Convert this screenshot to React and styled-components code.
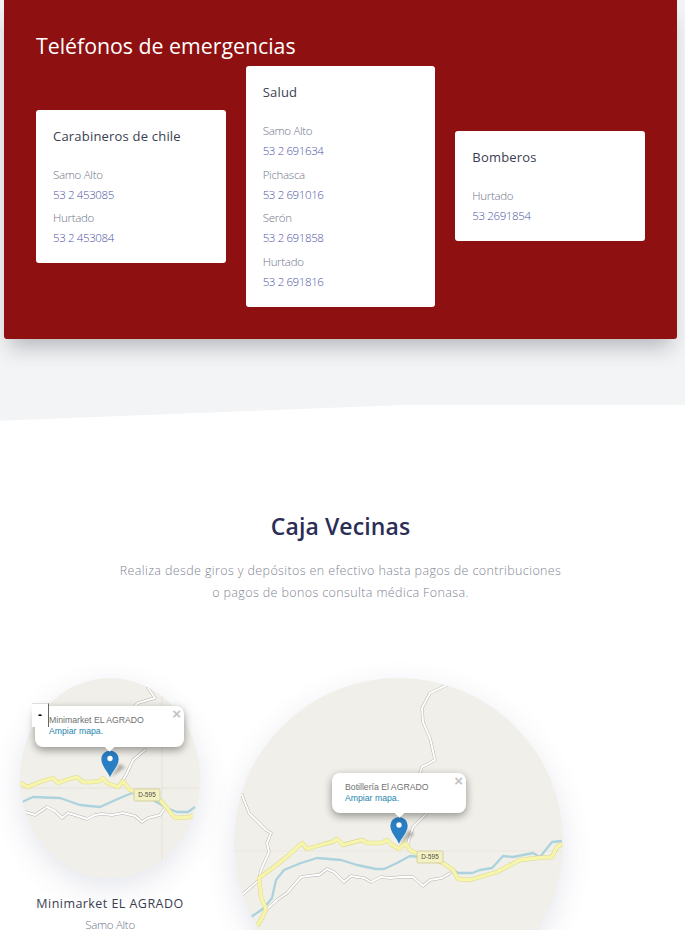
import React from "react";
import styled, { createGlobalStyle } from "styled-components";

const Global = createGlobalStyle`
  html, body { margin: 0; padding: 0; background: #fff; overflow: hidden; height: 930px; }
  #root { height: 930px; overflow: hidden; }
  * { box-sizing: border-box; }
  body { font-family: "Open Sans", "Liberation Sans", sans-serif; }
`;

const TopBand = styled.section`
  background: #f3f4f6;
  padding: 0 8px 66px 4px;
`;
const Panel = styled.div`
  background: #8f1010;
  border-radius: 0 0 3px 3px;
  padding: 31px 32px 32px;
  box-shadow: 0 14px 20px -6px rgba(50, 60, 65, 0.32);
`;
const PanelTitle = styled.h2`
  margin: 0 0 5px;
  color: #fff;
  font-size: 21.3px;
  font-weight: 400;
  line-height: 30px;
`;
const CardRow = styled.div`
  display: grid;
  grid-template-columns: repeat(3, 1fr);
  gap: 20px;
  align-items: center;
`;
const Card = styled.div`
  background: #fff;
  border-radius: 3px;
  padding: 16px 17px 14.7px;
`;
const CardTitle = styled.h3`
  margin: 0 0 19px;
  color: #3b3e50;
  font-size: 13px;
  font-weight: 400;
  line-height: 20px;
  letter-spacing: 0.2px;
`;
const Contact = styled.div`
  & + & { margin-top: 3.67px; }
`;
const Place = styled.div`
  color: #70768a;
  font-size: 11.5px;
  font-weight: 300;
  line-height: 20px;
  letter-spacing: -0.3px;
`;
const Phone = styled.a`
  display: block;
  color: #4d55a6;
  font-size: 11.5px;
  font-weight: 300;
  line-height: 20px;
  letter-spacing: -0.38px;
`;
const Wedge = styled.div`
  height: 16px;
  background: #f3f4f6;
  clip-path: polygon(0 0, 100% 0, 60% 0, 0 100%);
`;
const Intro = styled.section`
  padding-top: 88px;
  text-align: center;
`;
const Heading = styled.h2`
  margin: 0 0 17px;
  color: #2c2e56;
  font-size: 23px;
  font-weight: 600;
  line-height: 34px;
  letter-spacing: 0.1px;
  transform: translateX(-2px);
`;
const Lead = styled.p`
  margin: 0;
  color: #7f8694;
  font-size: 12.5px;
  font-weight: 300;
  line-height: 22px;
  letter-spacing: 0.38px;
  transform: translateX(-2px);
`;
const MapGrid = styled.div`
  display: grid;
  grid-template-columns: 180px 329px;
  column-gap: 34px;
  align-items: start;
  padding: 74px 0 0 20px;
`;
const Store = styled.div`
  text-align: center;
`;
const MapFrame = styled.div`
  position: relative;
  width: ${(p) => p.$w}px;
  height: ${(p) => p.$h}px;
`;
const MapSurface = styled.svg`
  display: block;
  width: 100%;
  height: 100%;
  border-radius: 50%;
  background: #f1efe9;
  box-shadow: 0 10px 30px rgba(70, 80, 120, 0.14);
`;
const Popup = styled.div`
  position: absolute;
  left: ${(p) => p.$x}px;
  top: ${(p) => p.$y}px;
  width: ${(p) => p.$w}px;
  height: ${(p) => p.$h}px;
  padding: 9px 0 0 ${(p) => p.$pad}px;
  background: #fff;
  border-radius: 8px;
  box-shadow: 0 3px 9px rgba(0, 0, 0, 0.4);
  font-family: "Liberation Sans", Arial, sans-serif;
  font-size: 8.7px;
  line-height: 11px;
  text-align: left;
  color: #6f6f6f;
  &::after {
    content: "";
    position: absolute;
    left: 50%;
    bottom: -3.5px;
    width: 9px;
    height: 9px;
    margin-left: -4.5px;
    background: #fff;
    transform: rotate(45deg);
  }
`;
const PopupLink = styled.a`
  display: block;
  color: #1f86ad;
`;
const Close = styled.span`
  position: absolute;
  top: 2px;
  right: 3px;
  color: #c3c3c3;
  font-size: 15px;
  font-weight: 700;
  line-height: 12px;
`;
const Zoom = styled.div`
  position: absolute;
  z-index: 1;
  left: 12px;
  top: 25px;
  width: 17px;
  height: 24px;
  background: #fff;
  border-top: 1px solid #dcdcdc;
  border-right: 1px solid #666;
  color: #000;
  font: 700 12px/22px "Liberation Sans", Arial, sans-serif;
  text-align: center;
`;
const StoreName = styled.div`
  margin-top: 15px;
  color: #3b3e50;
  font-size: 12.5px;
  line-height: 22px;
  letter-spacing: 0.45px;
  white-space: nowrap;
`;
const StoreTown = styled.div`
  color: #70768a;
  font-size: 11.5px;
  font-weight: 300;
  line-height: 20px;
  letter-spacing: -0.3px;
`;

const Road = ({ d }) => (
  <>
    <path d={d} fill="none" stroke="#b4b3ad" strokeWidth="3" strokeLinejoin="round" strokeLinecap="round" />
    <path d={d} fill="none" stroke="#fff" strokeWidth="2" strokeLinejoin="round" strokeLinecap="round" />
  </>
);
const Highway = ({ d }) => (
  <>
    <path d={d} fill="none" stroke="#dcd994" strokeWidth="4.4" strokeLinejoin="round" />
    <path d={d} fill="none" stroke="#f7f5ac" strokeWidth="3.3" strokeLinejoin="round" />
  </>
);
const River = ({ d }) => <path d={d} fill="none" stroke="#acd3dd" strokeWidth="2.3" strokeLinejoin="round" />;
const Pin = ({ x, y }) => (
  <g transform={`translate(${x} ${y}) scale(0.333)`}>
    <path d="M4 80 L28 40 L46 50 Z" fill="#77776f" opacity="0.55" filter="url(#soft)" />
    <path d="M0 80 C-6 64 -26 46 -26 26 A26 26 0 0 1 26 26 C26 46 6 64 0 80 Z" fill="#2a7fc4" />
    <circle cx="0" cy="24" r="8" fill="#fff" />
  </g>
);
const Shield = ({ x, y }) => (
  <g>
    <rect x={x} y={y} width="26" height="12" rx="1.5" fill="#f3f0c4" stroke="#cdca96" strokeWidth="0.8" />
    <text x={x + 13} y={y + 8.4} textAnchor="middle" fontFamily="Liberation Sans, Arial, sans-serif" fontSize="6.4" fill="#4a4a40">D-595</text>
  </g>
);

const SmallMap = () => (
  <MapSurface viewBox="20 678 180 200" aria-hidden="true">
    <defs>
      <filter id="soft"><feGaussianBlur stdDeviation="4" /></filter>
      <filter id="fine"><feGaussianBlur stdDeviation="0.25" /></filter>
    </defs>
    <g filter="url(#fine)">
      <path d="M20 788H200M162 678V878" stroke="#e2dfd8" strokeWidth="0.8" fill="none" />
      <River d="M22 802L33 797L60 798L80 805L100 807L120 798L132 793L153 800L167 808L177 812L188 812L195 807" />
      <Road d="M25 812L35 815L47 807L55 811L62 818L68 813L78 816L87 819L95 815L102 814L112 815L123 813L135 816L142 822L148 818L160 815L165 808" />
      <Road d="M148 688L155 698L138 703L135 706M145 750L133 760L127 773L123 780" />
      <Highway d="M20 783L28 787L40 782L53 778L58 783L66 780L77 777L83 782L92 782L100 781L103 778L107 783L118 787L123 781L130 790L145 795L160 800L167 808L175 818L190 817L193 815" />
      <Shield x={134} y={789} />
    </g>
    <Pin x={110} y={750.5} />
  </MapSurface>
);

const BigMap = () => (
  <MapSurface viewBox="234 678 329 329" aria-hidden="true">
    <g filter="url(#fine)">
      <path d="M234 851H563" stroke="#e8e5de" strokeWidth="0.8" fill="none" />
      <River d="M251 917L264 908L272 898L276 880L284 870L301 863L317 858L341 860L357 865L376 869L384 869L397 863L410 856L420 857L443 863L458 873L472 873L480 870L492 868L503 856L513 857L533 853L540 857L552 842L562 841" />
      <Road d="M266 910L277 900L287 893L294 885L301 877L316 875L319 875L327 869L334 872L344 882L351 876L364 878L371 882L381 877L390 878L401 877L413 877L423 886L430 880L442 878L450 873" />
      <Road d="M447 685L430 693L422 708L423 722L430 738L435 760L422 767L420 773M427 813L413 827L408 843" />
      <Road d="M242 795L249 813L266 830L271 833L267 843L269 852L261 870L259 880L242 895" />
      <Highway d="M257 926L262 918L266 909L261 897L259 878L274 867L289 855L302 843L307 849L324 844L332 842L337 839L343 845L362 840L367 843L382 843L387 840L392 845L399 849L405 843L410 850L420 855L443 863L453 870L458 879L470 880L480 877L497 872L520 860L537 858L552 857L557 847L562 844" />
      <Shield x={417} y={851} />
    </g>
    <Pin x={399} y={817} />
  </MapSurface>
);

const groups = [
  { title: "Carabineros de chile", items: [["Samo Alto", "53 2 453085"], ["Hurtado", "53 2 453084"]] },
  { title: "Salud", items: [["Samo Alto", "53 2 691634"], ["Pichasca", "53 2 691016"], ["Serón", "53 2 691858"], ["Hurtado", "53 2 691816"]] },
  { title: "Bomberos", items: [["Hurtado", "53 2691854"]] },
];

export default function App() {
  return (
    <>
      <Global />
      <TopBand>
        <Panel>
          <PanelTitle>Teléfonos de emergencias</PanelTitle>
          <CardRow>
            {groups.map((g) => (
              <Card key={g.title}>
                <CardTitle>{g.title}</CardTitle>
                {g.items.map(([place, phone]) => (
                  <Contact key={place}>
                    <Place>{place}</Place>
                    <Phone>{phone}</Phone>
                  </Contact>
                ))}
              </Card>
            ))}
          </CardRow>
        </Panel>
      </TopBand>
      <Wedge />
      <Intro>
        <Heading>Caja Vecinas</Heading>
        <Lead>
          Realiza desde giros y depósitos en efectivo hasta pagos de contribuciones
          <br />o pagos de bonos consulta médica Fonasa.
        </Lead>
      </Intro>
      <MapGrid>
        <Store>
          <MapFrame $w={180} $h={200}>
            <SmallMap />
            <Popup $x={15} $y={28} $w={149} $h={41} $pad={14}>
              Minimarket EL AGRADO
              <PopupLink>Ampiar mapa.</PopupLink>
              <Close>×</Close>
            </Popup>
            <Zoom>-</Zoom>
          </MapFrame>
          <StoreName>Minimarket EL AGRADO</StoreName>
          <StoreTown>Samo Alto</StoreTown>
        </Store>
        <Store>
          <MapFrame $w={329} $h={329}>
            <BigMap />
            <Popup $x={98} $y={95} $w={134} $h={40} $pad={13}>
              Botillería El AGRADO
              <PopupLink>Ampiar mapa.</PopupLink>
              <Close>×</Close>
            </Popup>
          </MapFrame>
        </Store>
      </MapGrid>
    </>
  );
}
